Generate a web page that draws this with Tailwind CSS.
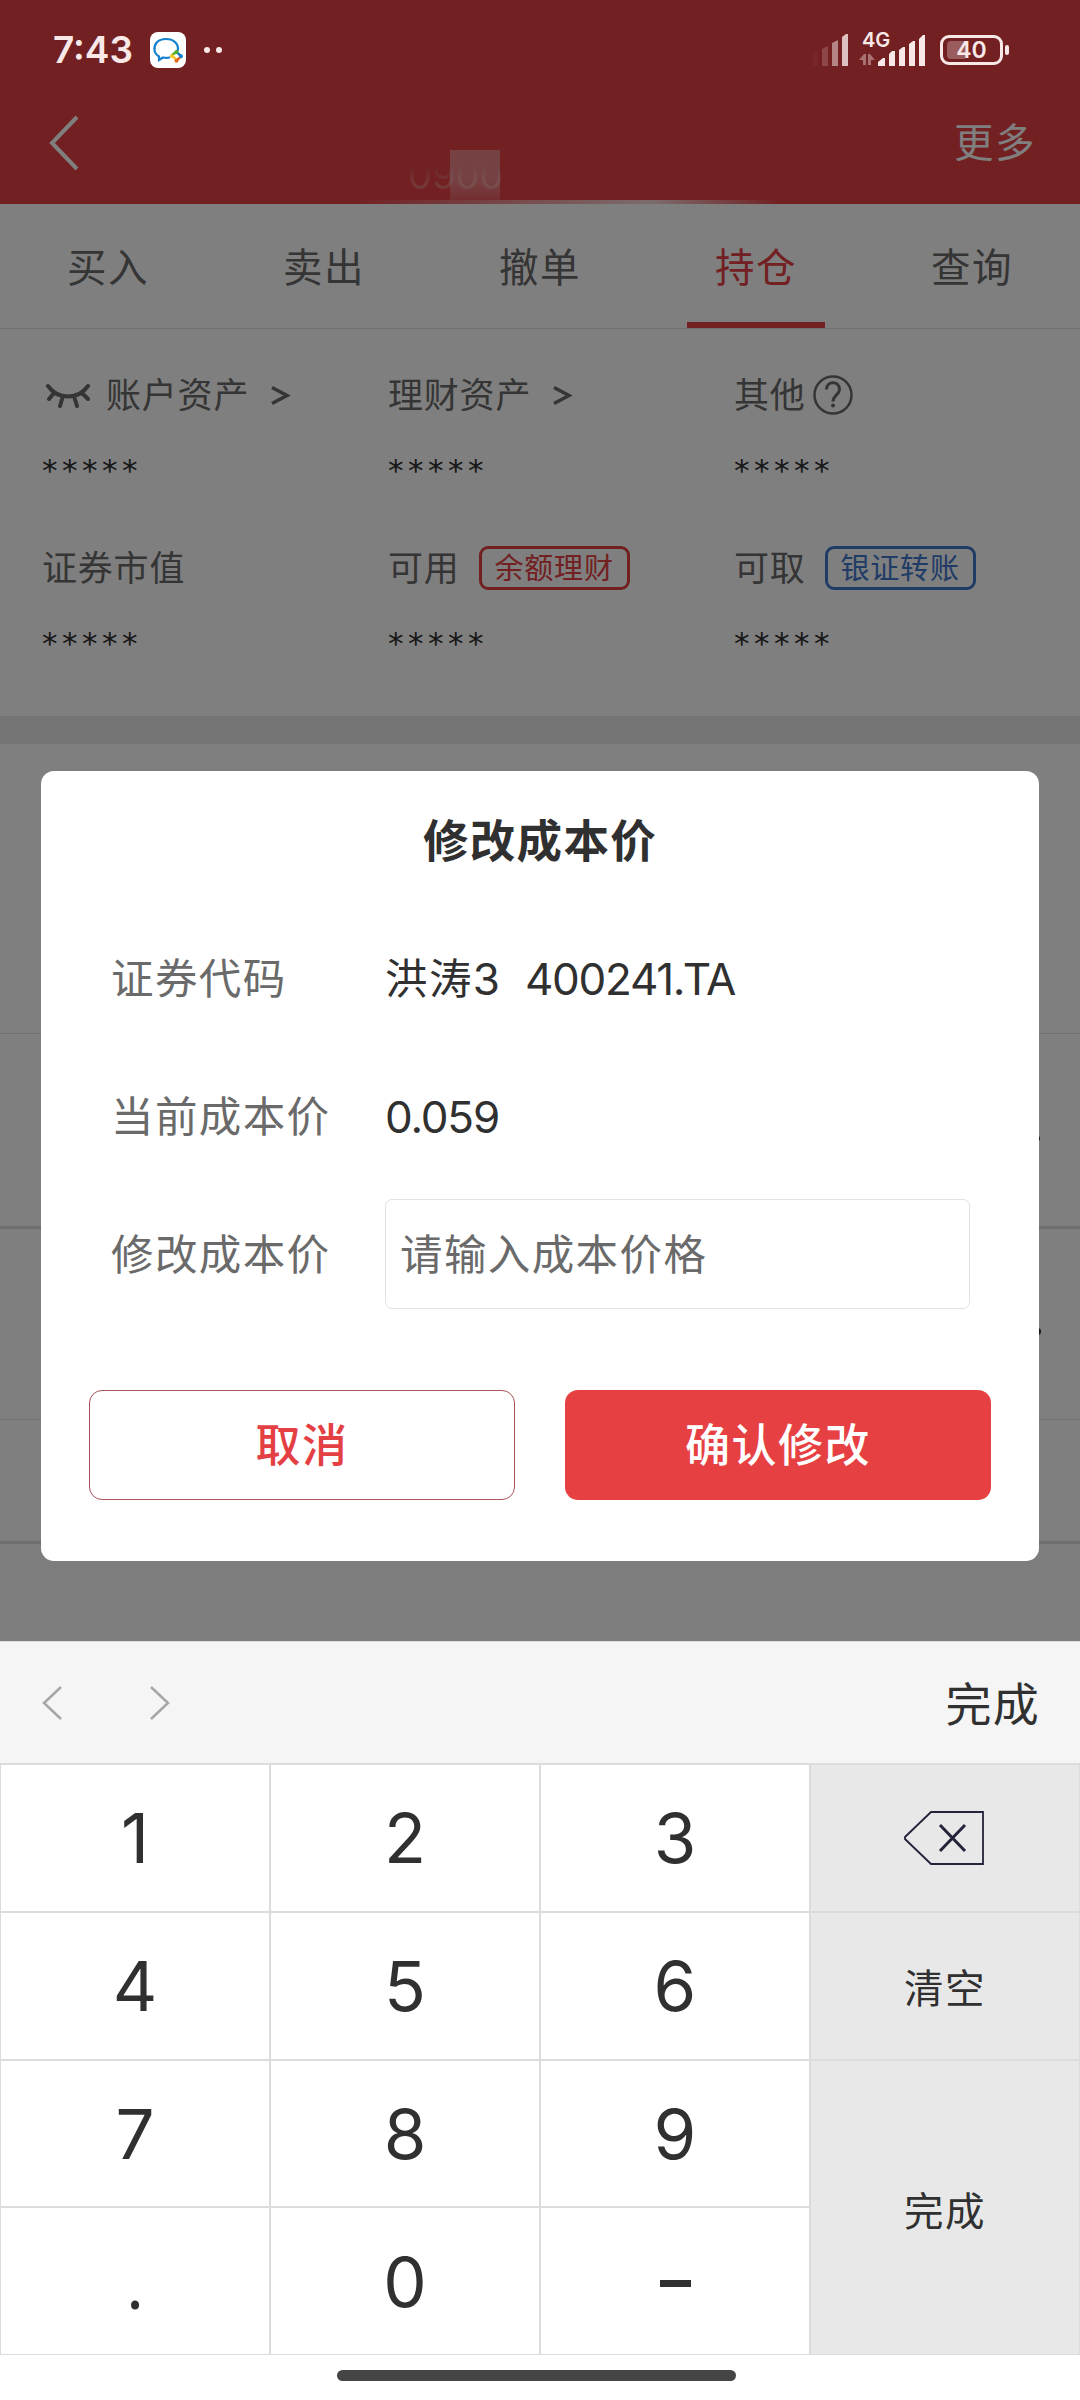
<!DOCTYPE html>
<html lang="zh-CN">
<head>
    <meta charset="UTF-8">
    <meta name="viewport" content="width=device-width, initial-scale=1.0">
    <title>修改成本价</title>
    <script src="https://cdn.jsdelivr.net/npm/@tailwindcss/browser@4"></script>
</head>
<body class="bg-white">
<div class="relative w-[1080px] h-[2400px] overflow-hidden font-[Inter,'Noto_Sans_CJK_SC',sans-serif] text-[#6a6a6a]">

    <!-- 交易页面 -->
    <header class="relative h-[204px] bg-[#e44044]">
        <div class="flex h-full items-end justify-between pl-[48px] pr-[44px] pb-[33px] text-white">
            <svg class="w-[32px] h-[56px]" viewBox="0 0 32 56" fill="none" stroke="currentColor" stroke-width="4"><path d="M29 2 4 28l25 26"/></svg>
            <span class="text-[39.500px] leading-[56px] tracking-[1.500px]">更多</span>
        </div>
        <span class="absolute left-[408px] top-[160px] h-[36px] flex items-end text-[38px] leading-[42px] text-white/25 mask-t-from-30% mask-t-to-90%">0900</span>
        <div class="absolute left-[450px] top-[150px] w-[50px] h-[50px] bg-linear-to-b from-white/35 via-white/35 via-60% to-white/15"></div>
        <div class="absolute left-[350px] top-[200px] w-[430px] h-[4px] bg-linear-to-r from-white/0 via-white/80 via-70% to-white/0"></div>
    </header>

    <nav class="grid grid-cols-5 h-[125px] border-b border-[#dfdfdf] text-[39.500px] leading-[128px] text-center tracking-[1.500px]">
        <span>买入</span>
        <span>卖出</span>
        <span>撤单</span>
        <span class="relative text-[#e44044]">持仓<i class="absolute left-[39px] top-[118px] w-[138px] h-[6px] bg-[#e44044]"></i></span>
        <span>查询</span>
    </nav>

    <section class="grid grid-cols-[346px_346px_346px] h-[387px] pl-[42px] pt-[42px] content-start text-[35px] tracking-[0.800px]">
        <div class="h-[173px]">
            <div class="flex items-center h-[48px]">
                <svg class="w-[46px] h-[26px] ml-[3px] mr-[15px]" viewBox="0 0 46 26" fill="none" stroke="currentColor" stroke-width="4" stroke-linecap="round"><path d="M3 4c10 14 30 14 40 0M9 11l-5 6M18 14l-3 10M29 14l3 10M37 11l6 6"/></svg>
                <span>账户资产</span>
                <svg class="w-[20px] h-[24px] ml-[22px] mt-[2px]" viewBox="0 0 20 24" fill="none" stroke="currentColor" stroke-width="3.500"><path d="M1 3.500l15 8-15 8"/></svg>
            </div>
            <p class="mt-[27px] h-[48px] font-['DejaVu_Sans'] text-[31px] leading-[48px] tracking-[4.500px] text-[#303030]">*****</p>
        </div>
        <div>
            <div class="flex items-center h-[48px]">
                <span>理财资产</span>
                <svg class="w-[20px] h-[24px] ml-[22px] mt-[2px]" viewBox="0 0 20 24" fill="none" stroke="currentColor" stroke-width="3.500"><path d="M1 3.500l15 8-15 8"/></svg>
            </div>
            <p class="mt-[27px] h-[48px] font-['DejaVu_Sans'] text-[31px] leading-[48px] tracking-[4.500px] text-[#303030]">*****</p>
        </div>
        <div>
            <div class="flex items-center h-[48px]">
                <span>其他</span>
                <svg class="w-[40px] h-[40px] ml-[7px]" viewBox="0 0 40 40" fill="none" stroke="currentColor" stroke-width="2.500"><circle cx="20" cy="20" r="18.500"/><path d="M13.500 14.500c0-9 13-9 13 0 0 5-6.500 6-6.500 12" stroke-width="3"/><circle cx="20" cy="30.500" r="2" fill="currentColor" stroke="none"/></svg>
            </div>
            <p class="mt-[27px] h-[48px] font-['DejaVu_Sans'] text-[31px] leading-[48px] tracking-[4.500px] text-[#303030]">*****</p>
        </div>
        <div>
            <div class="flex items-center h-[48px]">证券市值</div>
            <p class="mt-[27px] h-[48px] font-['DejaVu_Sans'] text-[31px] leading-[48px] tracking-[4.500px] text-[#303030]">*****</p>
        </div>
        <div>
            <div class="flex items-center h-[48px]">
                <span>可用</span>
                <span class="w-[151px] h-[44px] ml-[19px] border-3 border-[#e44044] rounded-[9px] text-[29px] leading-[39px] text-center text-[#e44044]">余额理财</span>
            </div>
            <p class="mt-[27px] h-[48px] font-['DejaVu_Sans'] text-[31px] leading-[48px] tracking-[4.500px] text-[#303030]">*****</p>
        </div>
        <div>
            <div class="flex items-center h-[48px]">
                <span>可取</span>
                <span class="w-[151px] h-[44px] ml-[19px] border-3 border-[#4078cc] rounded-[9px] text-[29px] leading-[39px] text-center text-[#4078cc]">银证转账</span>
            </div>
            <p class="mt-[27px] h-[48px] font-['DejaVu_Sans'] text-[31px] leading-[48px] tracking-[4.500px] text-[#303030]">*****</p>
        </div>
    </section>

    <div class="h-[28px] bg-[#eaeaea]"></div>
    <div class="h-[290px] border-b border-[#dfdfdf]"></div>
    <div class="relative h-[195px] border-b-3 border-[#dfdfdf]"><i class="absolute left-[1036px] top-[102px] w-[4px] h-[5px] rounded-full bg-[#303030]"></i></div>
    <div class="relative h-[191px] border-b border-[#dfdfdf]"><i class="absolute left-[1034px] top-[99px] w-[7px] h-[7px] rounded-full bg-[#303030]"></i></div>
    <div class="h-[124px] border-b-3 border-[#dfdfdf]"></div>
    <div class="h-[97px] bg-[#fafafa]"></div>

    <!-- 遮罩 -->
    <div class="absolute left-0 top-0 w-full h-[1641px] bg-black/50"></div>

    <!-- 状态栏 -->
    <div class="absolute left-0 top-0 w-full h-[100px] flex items-center justify-between pl-[53px] pr-[71px] text-[#f8e8e8]">
        <div class="flex items-center">
            <span class="w-[97px] text-[37px] leading-[100px] font-semibold">7:43</span>
            <svg class="w-[36px] h-[36px]" viewBox="0 0 36 36" fill="none"><rect width="36" height="36" rx="8" fill="#fff"/><path d="M27.500 19c2-6-3-12-11.500-12S4 12 4.500 18c.2 3 2 5 4.500 6.500L9 28l4-2.500q4 1 7-.3" stroke="#1482cf" stroke-width="2.200"/><path d="M26.500 20l4.500 4" stroke="#1482cf" stroke-width="2.500"/><path d="M21 24l5-4" stroke="#53ad2c" stroke-width="2.500"/><path d="M22 23.500l4.500 4.500" stroke="#f6c92c" stroke-width="2.500"/><path d="M26.500 28.500l4.500-4" stroke="#e2691d" stroke-width="2.500"/><circle cx="26.500" cy="20" r="2" fill="#53ad2c"/><circle cx="31" cy="24.300" r="2" fill="#1482cf"/><circle cx="26.500" cy="28.800" r="2" fill="#e2691d"/><circle cx="22" cy="24.300" r="2" fill="#f6c92c"/></svg>
            <i class="w-[6px] h-[6px] ml-[18px] rounded-full bg-[#f8e8e8]"></i>
            <i class="w-[6px] h-[6px] ml-[6px] rounded-full bg-[#f8e8e8]"></i>
        </div>
        <div class="flex items-center">
            <svg class="w-[40px] h-[32px]" viewBox="0 0 40 32" fill="currentColor"><path d="M4 19l5-3v16H4z" opacity=".04"/><path d="M13 15l6-3v20h-6z" opacity=".2"/><path d="M23 9l6-3v26h-6z" opacity=".5"/><path d="M33 3l4-3h2v32h-6z" opacity=".8"/></svg>
            <div class="relative w-[68px] h-[36px] ml-[10px]">
                <span class="absolute left-[3px] top-0 text-[20px] leading-[16px] font-semibold">4G</span>
                <svg class="w-[68px] h-[36px]" viewBox="0 0 68 36" fill="currentColor"><path d="M0 28l5-6h2v11H4v-5zM9 33V22h2l5 6h-4v5z" opacity=".4"/><path d="M19 34v-4l5-4h2v8zM30 34V22l3-3h3v15zM40 34V18l4-3h2v19zM50 34V12l4-3h2v25zM60 34V7l4-4h2v31z"/></svg>
            </div>
            <div class="relative w-[63px] h-[30px] ml-[13px] border-[3px] border-[#f8e8e8] rounded-[9px]">
                <i class="absolute left-[4px] top-[3px] w-[20px] h-[18px] rounded-[4px] bg-[#f8e8e8]/30"></i>
                <span class="absolute left-0 top-0 w-full text-[23px] leading-[25px] font-semibold text-center">40</span>
            </div>
            <i class="w-[4px] h-[10px] ml-[2px] rounded-[2px] bg-[#f8e8e8]"></i>
        </div>
    </div>

    <!-- 修改成本价弹窗 -->
    <div class="absolute left-[41px] top-[771px] w-[998px] h-[790px] px-[48px] bg-white rounded-[13px]">
        <h2 class="pt-[41px] text-[45.500px] leading-[60px] tracking-[1.300px] font-bold text-center text-[#303030]">修改成本价</h2>
        <div class="grid grid-cols-[274px_585px] auto-rows-[110px] gap-y-[27.500px] mt-[52px] pl-[22px] items-center text-[42.500px] tracking-[1.400px]">
            <span>证券代码</span>
            <span class="text-[#303030] flex items-center">洪涛<span class="text-[44px] tracking-[-2px]">3</span><span class="ml-[27px] text-[44px] tracking-[-1.300px]">400241.TA</span></span>
            <span>当前成本价</span>
            <span class="text-[44px] tracking-[-1.200px] text-[#303030]">0.059</span>
            <span class="pt-[2px]">修改成本价</span>
            <div class="h-[110px] pl-[14px] border border-[#e2e2e2] rounded-[7px] leading-[110px]">请输入成本价格</div>
        </div>
        <div class="grid grid-cols-2 gap-x-[50px] mt-[81px] text-[45px] leading-[110px] tracking-[1.500px] font-medium text-center">
            <button class="h-[110px] border border-[#a85558] rounded-[13px] leading-[110px] text-[#e44044]">取消</button>
            <button class="h-[110px] rounded-[13px] leading-[112px] bg-[#e64042] text-white">确认修改</button>
        </div>
    </div>

    <!-- 数字键盘 -->
    <div class="absolute left-0 top-[1641px] w-full h-[759px] bg-white text-[#303030]">
        <div class="flex items-center h-[122px] pl-[41px] pr-[40px] bg-[#f5f5f5] border-t border-[#dcdcdc]">
            <svg class="w-[22px] h-[36px]" viewBox="0 0 22 36" fill="none" stroke="#a6a6a6" stroke-width="2.500"><path d="M20 2 3 18l17 16"/></svg>
            <svg class="w-[22px] h-[36px] ml-[86px]" viewBox="0 0 22 36" fill="none" stroke="#a6a6a6" stroke-width="2.500"><path d="m2 2 17 16L2 34"/></svg>
            <span class="ml-auto pt-[3px] text-[46px] tracking-[1.200px] leading-[120px]">完成</span>
        </div>
        <div class="grid grid-cols-4 grid-rows-4 h-[592px] border-t border-[#dcdcdc] text-[69px] leading-none *:flex *:items-center *:justify-center *:border *:border-[#dcdcdc]">
            <div class="pt-[2px]">1</div>
            <div class="pt-[2px]">2</div>
            <div class="pt-[2px]">3</div>
            <div class="bg-[#e8e8e8]">
                <svg class="w-[82px] h-[56px] mr-[3px]" viewBox="0 0 82 56" fill="none" stroke="#23233a"><path d="M28 2h52v52H28L2 29v-2z" stroke-width="1.800"/><path d="m37 15 25 26M62 15 37 41" stroke-width="3"/></svg>
            </div>
            <div class="pt-[2px]">4</div>
            <div class="pt-[2px]">5</div>
            <div class="pt-[2px]">6</div>
            <div class="pt-[9px] bg-[#e8e8e8] text-[39.500px] tracking-[1.500px]">清空</div>
            <div class="pt-[2px]">7</div>
            <div class="pt-[2px]">8</div>
            <div class="pt-[2px]">9</div>
            <div class="row-span-2 pt-[11px] bg-[#e8e8e8] text-[39.500px] tracking-[1.500px]">完成</div>
            <div class="pt-[2px] font-['Open_Sans']">.</div>
            <div class="pt-[2px]">0</div>
            <div><i class="w-[31px] h-[7px] mt-[4px] bg-[#303030]"></i></div>
        </div>
        <div class="w-[399px] h-[11px] ml-[337px] mt-[15px] rounded-full bg-[#454545]"></div>
    </div>
</div>
</body>
</html>
